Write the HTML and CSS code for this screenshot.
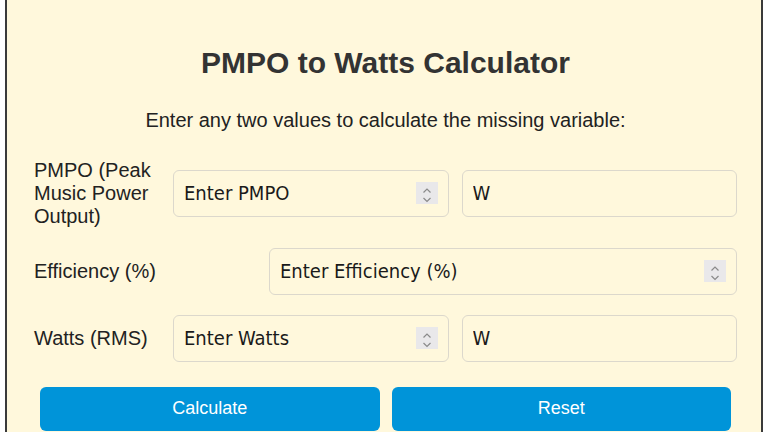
FILE: index.html
```html
<!DOCTYPE html>
<html lang="en">
<head>
<meta charset="utf-8">
<title>PMPO to Watts Calculator</title>
<link rel="stylesheet" href="styles.css">
</head>
<body>
<main class="card">
  <h1 class="title">PMPO to Watts Calculator</h1>
  <p class="intro">Enter any two values to calculate the missing variable:</p>
  <form class="form">
    <div class="row row-pair">
      <label class="label" for="pmpo">PMPO (Peak Music Power Output)</label>
      <div class="field">
        <input class="input" id="pmpo" type="text" placeholder="Enter PMPO">
        <span class="spin"><svg viewBox="0 0 22 22" width="22" height="22"><polyline points="7.5,12 11,8.5 14.5,12" transform="translate(0,-1.5)"/><polyline points="7.5,10 11,13.5 14.5,10" transform="translate(0,6)"/></svg></span>
      </div>
      <input class="input" type="text" value="W" readonly>
    </div>
    <div class="row row-single">
      <label class="label" for="eff">Efficiency (%)</label>
      <div class="field">
        <input class="input" id="eff" type="text" placeholder="Enter Efficiency (%)">
        <span class="spin"><svg viewBox="0 0 22 22" width="22" height="22"><polyline points="7.5,12 11,8.5 14.5,12" transform="translate(0,-1.5)"/><polyline points="7.5,10 11,13.5 14.5,10" transform="translate(0,6)"/></svg></span>
      </div>
    </div>
    <div class="row row-pair">
      <label class="label" for="watts">Watts (RMS)</label>
      <div class="field">
        <input class="input" id="watts" type="text" placeholder="Enter Watts">
        <span class="spin"><svg viewBox="0 0 22 22" width="22" height="22"><polyline points="7.5,12 11,8.5 14.5,12" transform="translate(0,-1.5)"/><polyline points="7.5,10 11,13.5 14.5,10" transform="translate(0,6)"/></svg></span>
      </div>
      <input class="input" type="text" value="W" readonly>
    </div>
    <div class="buttons">
      <button class="btn" type="button">Calculate</button>
      <button class="btn" type="button">Reset</button>
    </div>
  </form>
</main>
</body>
</html>
```
FILE: styles.css
```css
html, body {
  margin: 0;
  background: #ffffff;
}
body {
  padding: 0 5px;
  font-family: "Liberation Sans", Arial, sans-serif;
  color: #222;
}
.card {
  background: #fff8dc;
  border-left: 2px solid #3a3a3a;
  border-right: 2px solid #3a3a3a;
  padding: 46px 24px 40px 27px;
  min-height: 500px;
}
.title {
  margin: 0 0 28px;
  font-size: 30px;
  line-height: 34.5px;
  font-weight: 700;
  color: #333;
  text-align: center;
}
.intro {
  margin: 0 0 27px;
  font-size: 20px;
  line-height: 23px;
  text-align: center;
  color: #222;
}
.form {
  display: flex;
  flex-direction: column;
  gap: 20px;
}
.row {
  display: grid;
  column-gap: 13px;
  align-items: center;
}
.row-pair {
  grid-template-columns: 126px 1fr 1fr;
}
.row-single {
  grid-template-columns: 222px 1fr;
}
.label {
  font-size: 20px;
  line-height: 23px;
  color: #222;
}
.field {
  position: relative;
}
.input {
  display: block;
  width: 100%;
  box-sizing: border-box;
  height: 47px;
  padding: 0 10px;
  border: 1px solid #dcd8cc;
  border-radius: 6px;
  background: #fff8dc;
  font-family: "DejaVu Sans Condensed", "DejaVu Sans", sans-serif;
  font-size: 20px;
  color: #1a1a1a;
  outline: none;
}
.input::placeholder {
  color: #1a1a1a;
  opacity: 1;
}
.spin {
  position: absolute;
  right: 11px;
  top: 12px;
  width: 22px;
  height: 22px;
  background: #e9e8ea;
}
.spin svg {
  display: block;
  fill: none;
  stroke: #8a8a8a;
  stroke-width: 1.2;
}
.buttons {
  display: flex;
  gap: 12px;
  padding: 0 6px;
  margin-top: 5px;
}
.btn {
  flex: 1;
  height: 44px;
  border: none;
  border-radius: 6px;
  background: #0094d9;
  color: #ffffff;
  font-family: "Liberation Sans", Arial, sans-serif;
  font-size: 18px;
}
```
